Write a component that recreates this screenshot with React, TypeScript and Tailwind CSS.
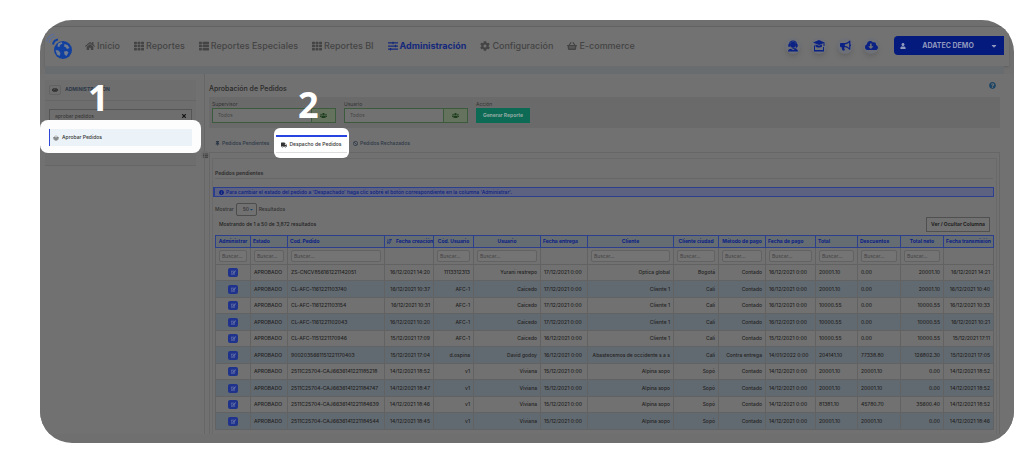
import { useState } from 'react'
import type { ReactNode } from 'react'
import type { IconType } from 'react-icons'
import { ShoppingBasket } from 'lucide-react'
import {
  FaBan,
  FaBullhorn,
  FaCaretDown,
  FaCloudDownloadAlt,
  FaCog,
  FaEdit,
  FaEye,
  FaHome,
  FaInfoCircle,
  FaListUl,
  FaQuestionCircle,
  FaShoppingBasket,
  FaSlidersH,
  FaSortAmountDown,
  FaTh,
  FaThList,
  FaThumbtack,
  FaTimes,
  FaTruck,
  FaUser,
  FaUsers,
} from 'react-icons/fa'

interface NavItem {
  label: string
  icon: IconType
  active?: boolean
}

const NAV_ITEMS: NavItem[] = [
  { label: 'Inicio', icon: FaHome },
  { label: 'Reportes', icon: FaTh },
  { label: 'Reportes Especiales', icon: FaThList },
  { label: 'Reportes BI', icon: FaTh },
  { label: 'Administración', icon: FaSlidersH, active: true },
  { label: 'Configuración', icon: FaCog },
  { label: 'E-commerce', icon: FaShoppingBasket },
]

interface Column {
  label: string
  width: string
  head: string
  cell: string
  filter: boolean
  sorted?: boolean
}

const COLUMNS: Column[] = [
  { label: 'Administrar', width: 'w-[35px]', head: 'text-center', cell: 'text-center', filter: true },
  { label: 'Estado', width: 'w-[37px]', head: 'text-left', cell: 'text-left', filter: true },
  { label: 'Cod. Pedido', width: 'w-[97px]', head: 'text-left', cell: 'text-left', filter: true },
  { label: 'Fecha creación', width: 'w-[49px]', head: 'text-right', cell: 'text-right', filter: false, sorted: true },
  { label: 'Cód. Usuario', width: 'w-[40px]', head: 'text-center', cell: 'text-right', filter: true },
  { label: 'Usuario', width: 'w-[67px]', head: 'text-center', cell: 'text-right', filter: true },
  { label: 'Fecha entrega', width: 'w-[47px]', head: 'text-left', cell: 'text-left', filter: false },
  { label: 'Cliente', width: 'w-[86px]', head: 'text-center', cell: 'text-right', filter: true },
  { label: 'Cliente ciudad', width: 'w-[45px]', head: 'text-center', cell: 'text-right', filter: true },
  { label: 'Método de pago', width: 'w-[47px]', head: 'text-center', cell: 'text-right', filter: true },
  { label: 'Fecha de pago', width: 'w-[50px]', head: 'text-left', cell: 'text-left', filter: true },
  { label: 'Total', width: 'w-[42px]', head: 'text-left', cell: 'text-left', filter: true },
  { label: 'Descuentos', width: 'w-[43px]', head: 'text-left', cell: 'text-left', filter: true },
  { label: 'Total neto', width: 'w-[43px]', head: 'text-center', cell: 'text-right', filter: true },
  { label: 'Fecha transmisión', width: 'w-[50px]', head: 'text-center', cell: 'text-right', filter: false },
]

const ORDERS: string[][] = [
  ['ZS-CNCV856161221142051', '16/12/2021 14:20', '1113312313', 'Yurani restrepo', '17/12/2021 0:00', 'Optica global', 'Bogotá', 'Contado', '16/12/2021 0:00', '20001.10', '0.00', '20001.10', '16/12/2021 14:21'],
  ['CL-AFC-1161221103740', '16/12/2021 10:37', 'AFC-1', 'Caicedo', '17/12/2021 0:00', 'Cliente 1', 'Cali', 'Contado', '16/12/2021 0:00', '20001.10', '0.00', '20001.10', '16/12/2021 10:40'],
  ['CL-AFC-1161221103154', '16/12/2021 10:31', 'AFC-1', 'Caicedo', '17/12/2021 0:00', 'Cliente 1', 'Cali', 'Contado', '16/12/2021 0:00', '10000.55', '0.00', '10000.55', '16/12/2021 10:33'],
  ['CL-AFC-1161221102043', '16/12/2021 10:20', 'AFC-1', 'Caicedo', '17/12/2021 0:00', 'Cliente 1', 'Cali', 'Contado', '16/12/2021 0:00', '10000.55', '0.00', '10000.55', '16/12/2021 10:21'],
  ['CL-AFC-1151221170946', '15/12/2021 17:09', 'AFC-1', 'Caicedo', '16/12/2021 0:00', 'Cliente 1', 'Cali', 'Contado', '15/12/2021 0:00', '10000.55', '0.00', '10000.55', '15/12/2021 17:11'],
  ['9002035661151221170403', '15/12/2021 17:04', 'd.ospina', 'David godoy', '16/12/2021 0:00', 'Abastecemos de occidente s a s', 'Cali', 'Contra entrega', '14/01/2022 0:00', '204141.10', '77338.80', '126802.30', '15/12/2021 17:05'],
  ['2511C25704-CAJ6636141221185218', '14/12/2021 18:52', 'v1', 'Viviana', '15/12/2021 0:00', 'Alpina sopo', 'Sopó', 'Contado', '14/12/2021 0:00', '20001.10', '20001.10', '0.00', '14/12/2021 18:52'],
  ['2511C25704-CAJ6636141221184747', '14/12/2021 18:47', 'v1', 'Viviana', '15/12/2021 0:00', 'Alpina sopo', 'Sopó', 'Contado', '14/12/2021 0:00', '20001.10', '20001.10', '0.00', '14/12/2021 18:52'],
  ['2511C25704-CAJ6636141221184639', '14/12/2021 18:46', 'v1', 'Viviana', '15/12/2021 0:00', 'Alpina sopo', 'Sopó', 'Contado', '14/12/2021 0:00', '81381.10', '45780.70', '35600.40', '14/12/2021 18:52'],
  ['2511C25704-CAJ6636141221184544', '14/12/2021 18:45', 'v1', 'Viviana', '15/12/2021 0:00', 'Alpina sopo', 'Sopó', 'Contado', '14/12/2021 0:00', '20001.10', '20001.10', '0.00', '14/12/2021 18:46'],
]

function Logo() {
  return (
    <svg viewBox="0 0 28 28" className="size-7" aria-hidden="true">
      <circle cx="18" cy="18" r="9" fill="#12409f" />
      <path d="M13 11.500l3.500-1.500 1 1.500-2.500 1.500-.5 2-2-.5zM19.500 12l3 1 2 3-2.500 1-1.500-2-1.500-.5z" fill="#727c90" />
      <path d="M10.500 18l3 .5 2 2.500-1 3-2.500-1.500zM19 19.500l3-.5 1.500 1.500-2 3.500-2-1.500z" fill="#727c90" />
      <path d="M1.500 9.500C2.500 5.500 5.500 2.500 9.500 2M4 11C4.500 7.500 7 5 10.500 4.500" fill="none" stroke="#5a6e9c" strokeWidth="1.200" />
      <path d="M8 12.500c.5-3 2-4.500 5-5" fill="none" stroke="#12409f" strokeWidth="2" />
    </svg>
  )
}

/** Agente con diadema */
function AgentIcon() {
  return (
    <svg viewBox="0 0 24 24" className="size-3" fill="currentColor" aria-hidden="true">
      <path d="M12 1a8 8 0 0 0-8 7.500H2.500v5H6V9a6 6 0 0 1 12 0v5c0 1.500-1 2.500-3 2.500h-2V15h-2v3h4c3 0 4.500-1.500 5-4.500h1.500v-5H20A8 8 0 0 0 12 1z" />
      <circle cx="12" cy="9.500" r="6" />
      <path d="M2 23c0-3.500 2.500-5.500 6-5.500l4 3 4-3c3.500 0 6 2 6 5.500z" />
    </svg>
  )
}

/** Birrete sobre un portátil */
function TrainingIcon() {
  return (
    <svg viewBox="0 0 24 24" className="size-3" fill="currentColor" aria-hidden="true">
      <path d="M12 0 0 5l12 5 9-3.700V12h2V5z" />
      <path d="M5 9v4c3 2.500 10 2.500 13 0V9l-6 2.500z" />
      <path d="M2 11h2v9h16v-6h2v9H2z" />
    </svg>
  )
}

function RoundButton({ label, children }: { label: string; children: ReactNode }) {
  return (
    <button
      type="button"
      aria-label={label}
      className="flex size-4 items-center justify-center rounded-full bg-[#6d7077] text-[#0b2184] shadow-md"
    >
      {children}
    </button>
  )
}

function Header() {
  return (
    <header className="mx-[5px] flex h-10 items-center border-t border-[#636363] bg-[#727272] pb-[2px] shadow-[0_1px_2px_#5f5f5f]">
      <a href="#inicio" aria-label="Inicio">
        <Logo />
      </a>
      <nav className="ml-3 flex items-center gap-[14px] text-[9px] leading-3 font-medium text-[#444]">
        {NAV_ITEMS.map(({ label, icon: Icon, active }) => (
          <a
            key={label}
            href="#nav"
            className={active ? 'flex items-center gap-[2px] font-bold text-[#14287c]' : 'flex items-center gap-[2px]'}
          >
            <Icon className="size-[10px]" />
            {label}
          </a>
        ))}
      </nav>
      <div className="mr-[15px] ml-auto flex gap-[10px]">
        <RoundButton label="Soporte">
          <AgentIcon />
        </RoundButton>
        <RoundButton label="Capacitación">
          <TrainingIcon />
        </RoundButton>
        <RoundButton label="Novedades">
          <FaBullhorn className="size-[11px]" />
        </RoundButton>
        <RoundButton label="Descargas">
          <FaCloudDownloadAlt className="size-[13px]" />
        </RoundButton>
      </div>
      <button
        type="button"
        className="mr-[5px] flex h-[19px] w-[110px] items-center justify-between rounded-l-sm bg-[#041a7c] px-[6px] text-[7px] leading-[9px] font-bold text-[#8f98bd]"
      >
        <FaUser className="size-[6px]" />
        <span>ADATEC DEMO</span>
        <FaCaretDown className="size-2" />
      </button>
    </header>
  )
}

function Sidebar() {
  const [search, setSearch] = useState('aprobar pedidos')

  return (
    <aside className="relative w-[161px] shrink-0 pt-[6px]">
      <div className="mx-[5px] h-[40px] bg-[#6e6e6e]">
        <div className="flex h-[21px] items-center gap-1 border-b border-[#666] px-1">
          <button
            type="button"
            aria-label="Ver menú"
            className="flex h-[10px] w-3 items-center justify-center rounded-xs border border-[#626262] text-[#222]"
          >
            <FaEye className="size-[6px]" />
          </button>
          <h2 className="text-[5px] font-bold text-[#2c3847]">ADMINISTRACIÓN</h2>
        </div>
        <div className="mx-1 mt-2 flex h-[11px] items-center border border-b-0 border-[#555] pt-px pr-1 pl-[5px]">
          <input
            type="text"
            aria-label="Buscar menú"
            value={search}
            onChange={(e) => setSearch(e.target.value)}
            className="w-full min-w-0 text-[5px] leading-[8px] text-[#333] outline-none"
          />
          <button type="button" aria-label="Limpiar" onClick={() => setSearch('')} className="text-[#111]">
            <FaTimes className="size-[6px]" />
          </button>
        </div>
      </div>
      <div className="rounded-lg bg-[#fdfdfd] px-[9px] pt-[9px] pb-[7px]">
        <a
          href="#aprobar"
          className="flex h-[17px] items-center gap-[3px] border-l border-[#2b46d6] bg-[#ecf3f8] pl-[3px] text-[5px] font-medium text-[#333]"
        >
          <ShoppingBasket className="size-[6px] text-[#555]" />
          Aprobar Pedidos
        </a>
      </div>
      <div className="mx-[5px] h-[13px] border-b border-[#666] bg-[#6e6e6e]" />
      <span className="absolute top-0 left-12 font-['Open_Sans',sans-serif] text-[36px] leading-[48px] font-bold text-white">
        1
      </span>
    </aside>
  )
}

function FilterSelect({ id, label }: { id: string; label: string }) {
  return (
    <div className="w-[124px]">
      <label htmlFor={id} className="block text-[5px] leading-[7px] text-[#333]">
        {label}
      </label>
      <div className="flex h-[15px] border border-[#3c5a3c]">
        <select id={id} className="min-w-0 flex-1 appearance-none bg-[#717171] pl-[5px] text-[5px] text-[#444]">
          <option>Todos</option>
        </select>
        <span className="flex w-6 items-center justify-center border-l border-[#3c5a3c] bg-[#65735e] text-[#1e3d1e]">
          <FaUsers className="size-[7px]" />
        </span>
      </div>
    </div>
  )
}

function Filters() {
  return (
    <form className="mx-1 flex h-[31px] gap-2 bg-[#6a6a6a] pt-1 pl-[3px]">
      <FilterSelect id="supervisor" label="Supervisor" />
      <FilterSelect id="usuario" label="Usuario" />
      <div>
        <p className="text-[5px] leading-[7px] text-[#333]">Acción</p>
        <button type="button" className="block h-[15px] w-[54px] bg-[#0d6b55] text-[5px] font-bold text-[#8fa9a2]">
          Generar Reporte
        </button>
      </div>
    </form>
  )
}

function Tabs() {
  return (
    <div role="tablist" className="mx-1 flex h-[25px] items-end border-b border-[#666] text-[5px] text-[#2c3847]">
      <button type="button" role="tab" className="flex h-[17px] w-[65px] items-center gap-[2px] pl-[6px] font-medium">
        <FaThumbtack className="size-[5px]" />
        Pedidos Pendientes
      </button>
      <div className="relative z-10 -mb-[6px] rounded-md bg-white px-[2px] pt-[7px] pb-[5px]">
        <button
          type="button"
          role="tab"
          aria-selected="true"
          className="flex h-[18px] w-[71px] items-center justify-center gap-[2px] border-t-2 border-b border-t-[#2743e0] border-b-[#ddd] font-medium text-[#333]"
        >
          <FaTruck className="size-[6px]" />
          Despacho de Pedidos
        </button>
      </div>
      <button type="button" role="tab" className="flex h-[17px] items-center gap-[2px] pl-1 font-medium">
        <FaBan className="size-[5px]" />
        Pedidos Rechazados
      </button>
    </div>
  )
}

function OrdersTable() {
  return (
    <table className="w-full table-fixed border-collapse text-[5px] leading-[7px] whitespace-nowrap text-[#222]">
      <thead>
        <tr className="h-3 bg-[#656d73] text-[#0b2184]">
          {COLUMNS.map((col) => (
            <th key={col.label} className={`${col.width} ${col.head} border border-[#2c3f8c] px-[2px] font-bold`}>
              {col.sorted && <FaSortAmountDown className="mr-1 inline size-[5px]" />}
              {col.label}
            </th>
          ))}
        </tr>
        <tr className="h-[17px]">
          {COLUMNS.map((col) => (
            <td key={col.label} className="border-x border-b border-[#626262] px-[3px]">
              {col.filter && (
                <input
                  type="text"
                  aria-label={`Buscar ${col.label}`}
                  placeholder="Buscar..."
                  className="block h-3 w-full rounded-xs border border-[#626262] bg-[#747474] pl-[2px] placeholder:text-[#444]"
                />
              )}
            </td>
          ))}
        </tr>
      </thead>
      <tbody>
        {ORDERS.map((order) => (
          <tr key={order[0]} className="odd:h-4 even:h-[17px] even:bg-[#626a71]">
            <td className="border border-[#626262]">
              <button
                type="button"
                aria-label="Administrar"
                className="mx-auto flex h-[9px] w-[10px] items-center justify-center rounded-xs bg-[#20338c] text-[#6672a6]"
              >
                <FaEdit className="size-[5px]" />
              </button>
            </td>
            <td className="border border-[#626262] pl-[3px] font-medium">APROBADO</td>
            {order.map((value, i) => (
              <td key={i} className={`${COLUMNS[i + 2].cell} border border-[#626262] px-[3px] font-medium`}>
                {value}
              </td>
            ))}
          </tr>
        ))}
      </tbody>
    </table>
  )
}

function OrdersPanel() {
  return (
    <div className="mx-1 border-x border-[#666] px-[2px] pt-[5px]">
      <section className="border border-b-0 border-[#696969] pr-[3px] pb-1 pl-[2px]">
        <h2 className="h-5 border-b border-[#666] pt-[10px] text-[5px] leading-[8px] font-bold text-[#333]">
          Pedidos pendientes
        </h2>
        <p className="mt-2 -mr-px -ml-[2px] flex h-[10px] items-center gap-[2px] border border-l-2 border-[#2c3f8c] bg-[#5d6280] pl-1 text-[5px] leading-[8px] font-medium text-[#0b2184]">
          <FaInfoCircle className="size-[5px]" />
          Para cambiar el estado del pedido a 'Despachado' haga clic sobré el botón correspondiente en la columna 'Administrar'.
        </p>
        <div className="mt-[6px] mb-px flex h-[13px] items-center gap-[2px] text-[5px] font-medium text-[#333]">
          <label htmlFor="page-size">Mostrar</label>
          <div className="relative flex items-center">
            <select
              id="page-size"
              className="h-[13px] w-[21px] appearance-none rounded-xs border border-[#4c4c4c] pl-[6px] text-[5px]"
            >
              <option>50</option>
            </select>
            <FaCaretDown className="pointer-events-none absolute right-[3px] size-[5px] text-[#1c4566]" />
          </div>
          <span>Resultados</span>
        </div>
        <div className="mb-[3px] flex h-[15px] items-center justify-between pr-[3px] pl-1 text-[5px] font-medium text-[#222]">
          <p>Mostrando de 1 a 50 de 3,872 resultados</p>
          <button type="button" className="h-[15px] w-16 border border-[#505050] font-bold whitespace-nowrap">
            Ver / Ocultar Columna
          </button>
        </div>
        <OrdersTable />
      </section>
    </div>
  )
}

export default function App() {
  return (
    <div className="bg-white pt-5 pr-[10px] pb-3 pl-10 font-[Inter,sans-serif]">
      <div className="overflow-hidden rounded-[32px] bg-[#6f6f6f] pt-[6px] pb-[9px]">
        <Header />
        <div className="mr-[10px] ml-[5px] h-2 bg-[#686c6e]" />
        <div className="flex bg-[#717171]">
          <Sidebar />
          <main className="relative ml-[3px] min-w-0 flex-1 border-l border-[#666] pr-[10px]">
            <div className="flex h-[23px] items-center justify-between px-1">
              <h1 className="mt-[5px] text-[7px] leading-[9px] font-medium text-[#2a2a2a]">Aprobación de Pedidos</h1>
              <a href="#ayuda" aria-label="Ayuda">
                <FaQuestionCircle className="mr-1 size-[7px] text-[#1c4566]" />
              </a>
            </div>
            <Filters />
            <Tabs />
            <OrdersPanel />
            <span className="absolute top-[7px] left-[93px] font-['Open_Sans',sans-serif] text-[36px] leading-[48px] font-bold text-white">
              2
            </span>
            <button
              type="button"
              aria-label="Contraer menú"
              className="absolute top-[77px] -left-1 flex size-2 items-center justify-center rounded-full bg-[#6b6b6b] text-[#222]"
            >
              <FaListUl className="size-[5px]" />
            </button>
          </main>
        </div>
      </div>
    </div>
  )
}
